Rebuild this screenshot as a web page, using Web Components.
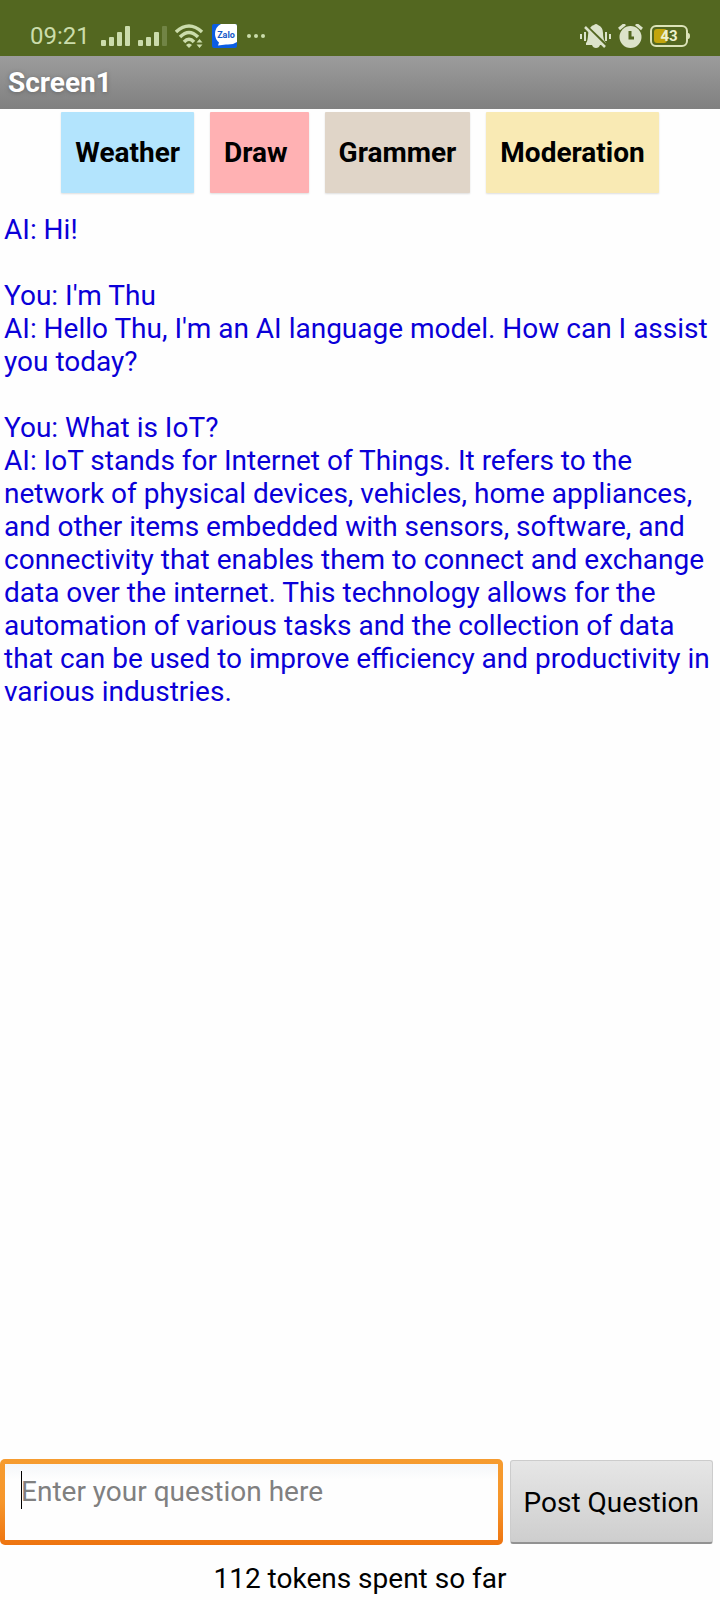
<!DOCTYPE html>
<html lang="en">
<head>
<meta charset="utf-8">
<meta name="viewport" content="width=device-width, initial-scale=1">
<title>Screen1</title>
<style>
  html, body { margin: 0; height: 100%; }
  body { background: #fefefe; font-family: Roboto, "Liberation Sans", sans-serif; font-size: 28px; line-height: 33px; color: #000; }
</style>
</head>
<body>
<chat-screen></chat-screen>

<template id="status-bar">
  <style>
    :host { display: flex; align-items: center; justify-content: space-between; box-sizing: border-box; height: 56px; padding: 16px 30px 0; background: #536720; color: #cbdcab; font-size: 24px; line-height: 40px; }
    div { display: flex; align-items: center; }
    .left { gap: 7px; }
    .right { gap: 7px; }
    svg { display: block; flex: none; }
    time { margin-right: 4px; }
  </style>
  <div class="left">
    <time>09:21</time>
    <svg width="30" height="24" viewBox="0 0 30 24" fill="#cbdcab" aria-label="Signal 1"><rect x="0" y="16" width="5" height="6" rx="1"/><rect x="8" y="13" width="5" height="9" rx="1"/><rect x="16" y="8" width="5" height="14" rx="1"/><rect x="24" y="2" width="5" height="20" rx="1"/></svg>
    <svg width="30" height="24" viewBox="0 0 30 24" fill="#cbdcab" aria-label="Signal 2"><rect x="0" y="16" width="5" height="6" rx="1"/><rect x="8" y="13" width="5" height="9" rx="1"/><rect x="16" y="8" width="5" height="14" rx="1"/><rect x="24" y="2" width="5" height="20" rx="1" fill="#718445"/></svg>
    <svg width="30" height="24" viewBox="0 0 30 24" fill="none" stroke="#cbdcab" stroke-width="3.500" aria-label="Wi-Fi"><path d="M1 8Q14-4 27 8M5 13Q14 4 23 13M9 18Q14 12.500 19 18"/><path d="M11 21Q14 18 17 21L14 24Z" fill="#cbdcab" stroke="none"/><path d="M21.500 18.500L24.500 15L27.500 18.500ZM21.500 20.500L24.500 24L27.500 20.500Z" fill="#cbdcab" stroke="none"/></svg>
    <svg width="25" height="24" viewBox="0 0 25 24" aria-label="Zalo"><rect width="25" height="24" rx="2" fill="#0b5de2"/><path d="M9 0H23Q25 0 25 2V18Q21 21 14 20.500L6 21.500L7 18.500Q3 15 3 10Q3 3 9 0Z" fill="#fff"/><text x="14" y="14" text-anchor="middle" font-family="Roboto, sans-serif" font-size="9" font-weight="700" fill="#1458c8">Zalo</text></svg>
    <svg width="22" height="24" viewBox="0 0 22 24" fill="#cbdcab" aria-label="More"><circle cx="5" cy="12" r="2"/><circle cx="12" cy="12" r="2"/><circle cx="19" cy="12" r="2"/></svg>
  </div>
  <div class="right">
    <svg width="31" height="24" viewBox="0 0 31 24" aria-label="Silent"><path d="M6 19C9 16 7 8 10 4Q12 1 14 1Q16-1 18 1Q23 3 23 9Q23 16 26 19V21H6Z" fill="#dce3ca"/><path d="M12 21H20Q19 24 16 24Q13 24 12 21Z" fill="#dce3ca"/><path d="M4 0L27 22" stroke="#536720" stroke-width="3"/><path d="M5 3L25 23" stroke="#dce3ca" stroke-width="2.500"/><path d="M1 10V15M5 8V17M26 8V17M30 10V15" stroke="#dce3ca" stroke-width="2"/></svg>
    <svg width="25" height="24" viewBox="0 0 25 24" fill="none" aria-label="Alarm"><circle cx="12.500" cy="13" r="11" fill="#dce3ca"/><path d="M1 5L7 0M24 5L18 0" stroke="#dce3ca" stroke-width="3"/><path d="M12 7V14H16" stroke="#536720" stroke-width="3"/></svg>
    <svg width="40" height="24" viewBox="0 0 40 24" aria-label="Battery"><rect x="1" y="2" width="36" height="20" rx="5" fill="none" stroke="#dce3b8" stroke-width="2"/><path d="M38 9Q40 9 40 12Q40 15 38 15Z" fill="#dce3b8"/><rect x="4" y="5" width="13" height="14" rx="3" fill="#c3a50d"/><text x="19" y="17" text-anchor="middle" font-family="Roboto, sans-serif" font-size="15" font-weight="700" fill="#ecf1cd">43</text></svg>
  </div>
</template>

<template id="title-bar">
  <style>
    :host { display: flex; align-items: center; box-sizing: border-box; height: 53px; padding: 0 8px; background: linear-gradient(#9c9c9c, #808080); color: #fff; }
    h1 { margin: 0; font-size: 28px; line-height: 33px; font-weight: 700; text-shadow: 0 1px 4px #666; }
  </style>
  <h1><slot></slot></h1>
</template>

<template id="mode-button">
  <style>
    :host { display: block; }
    button { display: block; height: 81px; padding: 0 14px; border: 0; border-radius: 1px; background: var(--tint); box-shadow: 0 1px 2px #ddd; color: #000; font: inherit; font-weight: 700; white-space: pre; }
  </style>
  <button type="button"><slot></slot></button>
</template>

<template id="chat-log">
  <style>
    :host { display: block; padding: 0 4px; color: #0a00d8; }
    p { margin: 0; }
    p.you { margin-top: 33px; }
  </style>
  <p>AI: Hi!</p>
  <p class="you">You: I'm Thu</p>
  <p>AI: Hello Thu, I'm an AI language model. How can I assist you today?</p>
  <p class="you">You: What is IoT?</p>
  <p>AI: IoT stands for Internet of Things. It refers to the network of physical devices, vehicles, home appliances, and other items embedded with sensors, software, and connectivity that enables them to connect and exchange data over the internet. This technology allows for the automation of various tasks and the collection of data that can be used to improve efficiency and productivity in various industries.</p>
</template>

<template id="question-form">
  <style>
    :host { display: block; }
    form { display: flex; gap: 7px; padding-right: 7px; align-items: center; }
    .field { position: relative; flex: 1; min-width: 0; box-sizing: border-box; height: 86px; padding: 5px; border-radius: 5px; background: linear-gradient(#f69c30 0%, #f6962b 50%, #ee7410 100%); }
    textarea { display: block; box-sizing: border-box; width: 100%; height: 100%; margin: 0; padding: 11px 16px; border: 0; outline: 0; resize: none; overflow: hidden; background: linear-gradient(#f5f7f9, #fefefe 16px); font: inherit; color: #000; }
    textarea::placeholder { color: #808080; opacity: 1; }
    .caret { position: absolute; left: 21px; top: 12px; width: 1px; height: 38px; background: #000; }
    button { height: 84px; padding: 2px 13px 0; border: 1px solid #ccc; border-bottom: 2px solid #929292; border-radius: 3px; background: linear-gradient(#e6e6e6, #cecece); color: #000; font: inherit; white-space: nowrap; }
  </style>
  <form>
    <div class="field"><textarea aria-label="Question" placeholder="Enter your question here"></textarea><span class="caret"></span></div>
    <button type="button">Post Question</button>
  </form>
</template>

<template id="chat-screen">
  <style>
    :host { display: flex; flex-direction: column; min-height: 100vh; }
    nav { display: flex; justify-content: center; gap: 16px; padding: 3px 0 20px; }
    main { flex: 1; }
    footer { padding: 17px 0 5px; text-align: center; }
  </style>
  <status-bar></status-bar>
  <title-bar>Screen1</title-bar>
  <nav>
    <mode-button style="--tint:#b3e4fd">Weather</mode-button>
    <mode-button style="--tint:#ffb1b3">Draw </mode-button>
    <mode-button style="--tint:#e0d5c8">Grammer</mode-button>
    <mode-button style="--tint:#f9eab4">Moderation</mode-button>
  </nav>
  <main><chat-log></chat-log></main>
  <question-form></question-form>
  <footer>112 tokens spent so far</footer>
</template>

<script>
  for (const name of ["status-bar", "title-bar", "mode-button", "chat-log", "question-form", "chat-screen"]) {
    customElements.define(name, class extends HTMLElement {
      constructor() {
        super();
        this.attachShadow({ mode: "open" }).append(document.getElementById(name).content.cloneNode(true));
      }
    });
  }
</script>
</body>
</html>
